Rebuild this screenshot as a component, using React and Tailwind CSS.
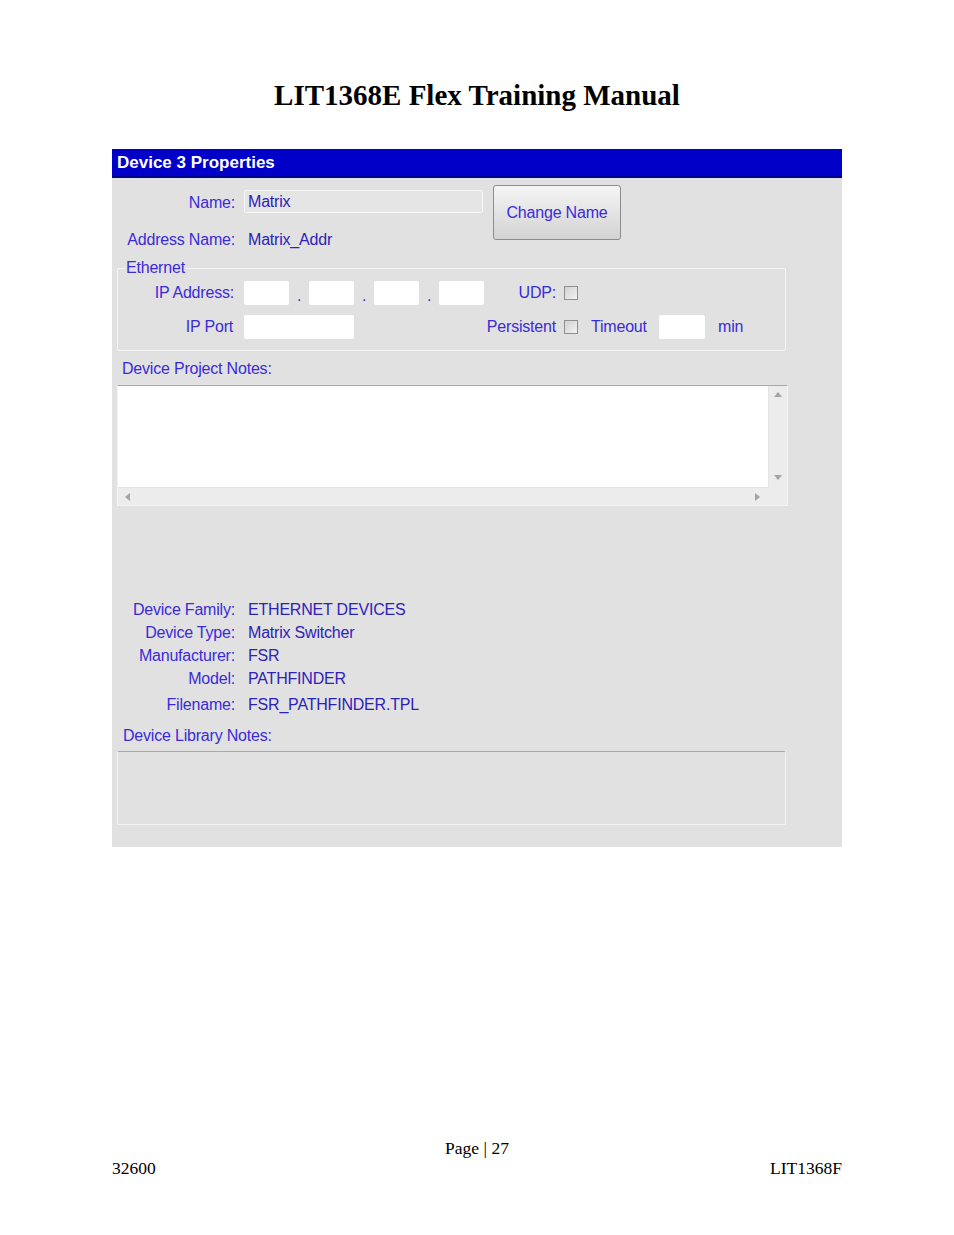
import React from "react";

// 라벨/값 색상
const LABEL = "text-[#3a2bd8]";
const VALUE = "text-[#2e22b8]";

const INFO_ROWS = [
  { label: "Device Family:", value: "ETHERNET DEVICES" },
  { label: "Device Type:", value: "Matrix Switcher" },
  { label: "Manufacturer:", value: "FSR" },
  { label: "Model:", value: "PATHFINDER" },
];

function WhiteBox({ className = "" }) {
  return <div className={`bg-white rounded-[2px] h-[24px] ${className}`}></div>;
}

function CheckBox() {
  return (
    <div className="w-[14px] h-[14px] border border-[#8e8e8e] bg-gradient-to-br from-[#d2d2d2] to-[#f2f2f2]"></div>
  );
}

function Arrow({ dir }) {
  const pts = {
    up: "0,6 4,1 8,6",
    down: "0,1 4,6 8,1",
    left: "6,0 1,4 6,8",
    right: "1,0 6,4 1,8",
  };
  return (
    <svg width="8" height="8" viewBox="0 0 8 8">
      <polygon points={pts[dir]} fill="#a4a4a4" />
    </svg>
  );
}

export default function App() {
  return (
    <div className="w-[954px] min-h-[1235px] bg-white font-['Liberation_Serif',serif] text-black">
      <h1 className="pt-[78px] text-center text-[29px] leading-[34px] font-bold">
        LIT1368E Flex Training Manual
      </h1>

      {/* 패널 */}
      <div className="mx-auto mt-[37px] w-[730px] bg-[#e1e1e1] pb-[22px] font-['Liberation_Sans',Arial,sans-serif] text-[16px] leading-[18px] tracking-[-0.2px]">
        <div className="h-[29px] bg-[#0000c8] border-b-2 border-[#00008c] px-[5px] flex items-center text-white font-bold text-[17px] tracking-normal">
          Device 3 Properties
        </div>

        {/* 이름 / 주소 */}
        <div className="flex items-start">
          <div className="w-[371px] pt-[12px]">
            <div className="flex items-center h-[23px]">
              <div className={`w-[123px] text-right pt-[2px] ${LABEL}`}>Name:</div>
              <div className={`ml-[9px] w-[239px] h-[23px] bg-[#e5e5e5] border border-[#f7f7f7] rounded-[2px] px-[3px] flex items-center ${VALUE}`}>
                Matrix
              </div>
            </div>
            <div className="flex items-center h-[23px] mt-[15px]">
              <div className={`w-[123px] text-right ${LABEL}`}>Address Name:</div>
              <div className={`ml-[13px] ${VALUE}`}>Matrix_Addr</div>
            </div>
          </div>
          <button className={`ml-[10px] mt-[7px] w-[128px] h-[55px] rounded-[3px] border border-[#8c8c8c] bg-gradient-to-b from-[#f5f5f5] to-[#d3d3d3] ${LABEL}`}>
            Change Name
          </button>
        </div>

        {/* Ethernet 그룹 */}
        <div className="relative ml-[5px] mt-[17px] w-[669px] border border-[#f6f6f6] rounded-[2px] pt-[12px] pb-[11px]">
          <span className={`absolute left-[7px] top-[-10px] bg-[#e1e1e1] px-[1px] ${LABEL}`}>Ethernet</span>
          <div className="flex items-center h-[24px]">
            <div className={`w-[116px] text-right ${LABEL}`}>IP Address:</div>
            <WhiteBox className="ml-[10px] w-[45px]" />
            <div className={`w-[20px] text-center pt-[5px] ${LABEL}`}>.</div>
            <WhiteBox className="w-[45px]" />
            <div className={`w-[20px] text-center pt-[5px] ${LABEL}`}>.</div>
            <WhiteBox className="w-[45px]" />
            <div className={`w-[20px] text-center pt-[5px] ${LABEL}`}>.</div>
            <WhiteBox className="w-[45px]" />
            <div className={`w-[72px] text-right ${LABEL}`}>UDP:</div>
            <div className="ml-[8px]">
              <CheckBox />
            </div>
          </div>
          <div className="flex items-center h-[24px] mt-[10px]">
            <div className={`w-[115px] text-right ${LABEL}`}>IP Port</div>
            <WhiteBox className="ml-[11px] w-[110px]" />
            <div className={`w-[202px] text-right ${LABEL}`}>Persistent</div>
            <div className="ml-[8px]">
              <CheckBox />
            </div>
            <div className={`ml-[13px] w-[56px] whitespace-nowrap ${LABEL}`}>Timeout</div>
            <WhiteBox className="ml-[12px] w-[46px]" />
            <div className={`ml-[13px] ${LABEL}`}>min</div>
          </div>
        </div>

        {/* 프로젝트 노트 */}
        <div className={`ml-[10px] mt-[9px] ${LABEL}`}>Device Project Notes:</div>
        <div className="ml-[5px] mt-[7px] w-[671px] h-[121px] border-t border-t-[#a6a6b4] border-x border-b border-[#f4f4f4] flex flex-col">
          <div className="flex flex-1">
            <div className="flex-1 bg-white"></div>
            <div className="w-[19px] bg-[#ececec] border-l border-[#e4e4e4] flex flex-col items-center justify-between py-[5px]">
              <Arrow dir="up" />
              <Arrow dir="down" />
            </div>
          </div>
          <div className="flex h-[18px]">
            <div className="flex-1 bg-[#ececec] border-t border-[#e4e4e4] flex items-center justify-between px-[6px]">
              <Arrow dir="left" />
              <Arrow dir="right" />
            </div>
            <div className="w-[19px] bg-[#ececec]"></div>
          </div>
        </div>

        {/* 장치 정보 */}
        <div className="mt-[92px]">
          {INFO_ROWS.map((row) => (
            <div key={row.label} className="flex items-center h-[23px]">
              <div className={`w-[123px] text-right ${LABEL}`}>{row.label}</div>
              <div className={`ml-[13px] ${VALUE}`}>{row.value}</div>
            </div>
          ))}
          <div className="flex items-center h-[23px] mt-[3px]">
            <div className={`w-[123px] text-right ${LABEL}`}>Filename:</div>
            <div className={`ml-[13px] ${VALUE}`}>FSR_PATHFINDER.TPL</div>
          </div>
        </div>

        <div className={`ml-[11px] mt-[11px] ${LABEL}`}>Device Library Notes:</div>
        <div className="ml-[5px] mt-[6px] w-[669px] h-[74px] border-t border-t-[#a6a6b4] border-x border-b border-[#f4f4f4] rounded-[2px]"></div>
      </div>

      {/* 페이지 하단 */}
      <div className="mt-[291px] text-center text-[17.5px] leading-[20px]">Page | 27</div>
      <div className="mx-auto w-[730px] flex justify-between text-[17.5px] leading-[20px]">
        <span>32600</span>
        <span>LIT1368F</span>
      </div>
    </div>
  );
}
